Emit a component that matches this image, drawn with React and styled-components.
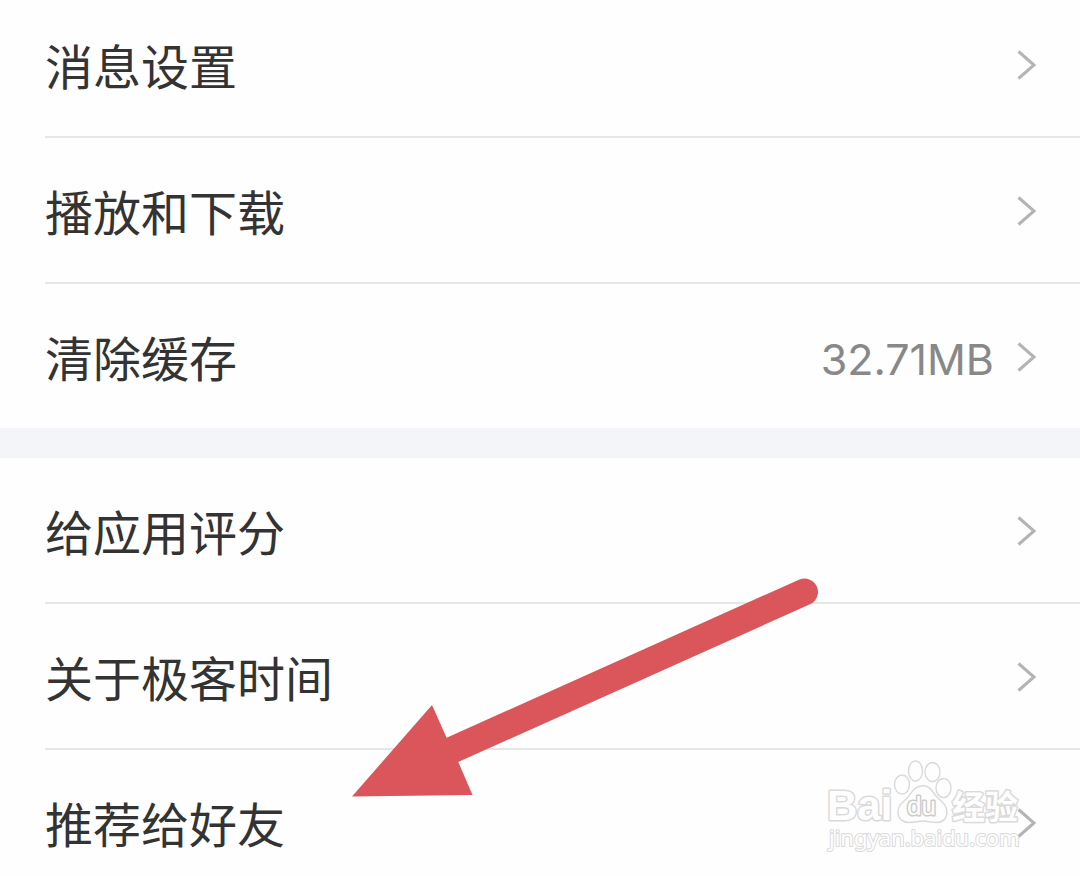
import React from "react";
import styled, { createGlobalStyle } from "styled-components";

const GlobalStyle = createGlobalStyle`
  * {
    box-sizing: border-box;
  }

  body {
    margin: 0;
    background-color: #fefefe;
    font-family: "Noto Sans CJK SC", sans-serif;
  }
`;

const Page = styled.main`
  position: relative;
  height: 100vh;
  overflow: hidden;
`;

// the list is scrolled a little past its first row's top edge
const Settings = styled.div`
  display: flex;
  flex-direction: column;
  gap: 30px;
  margin-top: -8px;
  background-color: #f4f5f9;
`;

const Group = styled.ul`
  margin: 0;
  padding: 0;
  list-style: none;
  background-color: #fefefe;
`;

const Item = styled.li`
  height: ${(props) => (props.$last ? "144px" : "146px")};
`;

const RowButton = styled.button`
  display: flex;
  align-items: center;
  width: calc(100% - 45px);
  height: 100%;
  margin-left: 45px;
  padding: 0 44px 0 0;
  border: 0;
  border-bottom: ${(props) => (props.$last ? "0" : "2px solid #e6e6e6")};
  background: none;
  color: #333;
  font-family: inherit;
  font-size: 48px;
  line-height: 72px;
  text-align: left;
  cursor: pointer;
`;

const Label = styled.span`
  flex: 1;
`;

const Value = styled.span`
  margin-right: 23px;
  padding-top: 6px;
  color: #888;
  font-family: Inter, sans-serif;
  font-size: 43px;
`;

const ChevronIcon = styled.svg`
  width: 19px;
  height: 32px;
  margin-top: 2px;
  fill: none;
  stroke: #b4b4b4;
  stroke-width: 3;
`;

const Arrow = styled.svg`
  position: absolute;
  top: 570px;
  left: 340px;
  width: 490px;
  height: 240px;
  pointer-events: none;
`;

const Watermark = styled.svg`
  position: absolute;
  top: 750px;
  right: 50px;
  width: 210px;
  height: 110px;
  fill: #fefefe;
  stroke: #dadada;
  stroke-width: 3;
  stroke-linejoin: round;
  pointer-events: none;

  text {
    paint-order: stroke;
  }
`;

const groups = [
  [
    { label: "消息设置" },
    { label: "播放和下载" },
    { label: "清除缓存", value: "32.71MB" },
  ],
  [
    { label: "给应用评分" },
    { label: "关于极客时间" },
    { label: "推荐给好友" },
  ],
];

const Chevron = () => (
  <ChevronIcon viewBox="0 0 19 32" aria-hidden="true">
    <path d="M1.5 2.5 L17 16 L1.5 29.5" />
  </ChevronIcon>
);

const Row = ({ item, last }) => (
  <Item $last={last}>
    <RowButton type="button" $last={last}>
      <Label>{item.label}</Label>
      {item.value && <Value>{item.value}</Value>}
      <Chevron />
    </RowButton>
  </Item>
);

const App = () => {
  return (
    <>
      <GlobalStyle />
      <Page>
        <Settings>
          {groups.map((items, g) => (
            <Group key={g}>
              {items.map((item, i) => (
                <Row key={item.label} item={item} last={i === items.length - 1} />
              ))}
            </Group>
          ))}
        </Settings>
        <Watermark viewBox="0 0 210 110">
          <text x="7" y="70" fontFamily="Liberation Sans" fontSize="42" fontWeight="700">
            Bai
          </text>
          <g strokeWidth="1.4">
            <ellipse cx="82" cy="34.5" rx="7.5" ry="9.5" />
            <ellipse cx="95.5" cy="21" rx="7" ry="10" />
            <ellipse cx="112.5" cy="22" rx="7.5" ry="9.5" />
            <ellipse cx="123.5" cy="38" rx="7.5" ry="9.5" />
            <path d="M103 35.7C95 35.7 92 42 88 47C83 52 78 55 78 62C78 69 83 72.5 89 72.5C95 72.5 98 71 103 71C108 71 111 72.5 117 72.5C123 72.5 127 68 127 62C127 55 121 51 116 46C112 41 110 35.7 103 35.7Z" />
          </g>
          <text x="87" y="65" fontFamily="Liberation Sans" fontSize="26" strokeWidth="3" stroke="#cccccc">
            du
          </text>
          <text x="132" y="69" fontFamily="Noto Sans CJK SC" fontSize="33" fontWeight="700">
            经验
          </text>
          <text x="9" y="96" fontFamily="Noto Sans" fontSize="22" strokeWidth="2">
            jingyan.baidu.com
          </text>
        </Watermark>
        <Arrow viewBox="0 0 490 240" aria-hidden="true">
          <path d="M12 226.5 L92 135 L106.5 167.5 L118.5 192.5 L132.5 225 Z" fill="#da565b" />
          <path d="M111 180.5 L464.5 22" stroke="#da565b" strokeWidth="27" strokeLinecap="round" />
        </Arrow>
      </Page>
    </>
  );
};

export default App;
